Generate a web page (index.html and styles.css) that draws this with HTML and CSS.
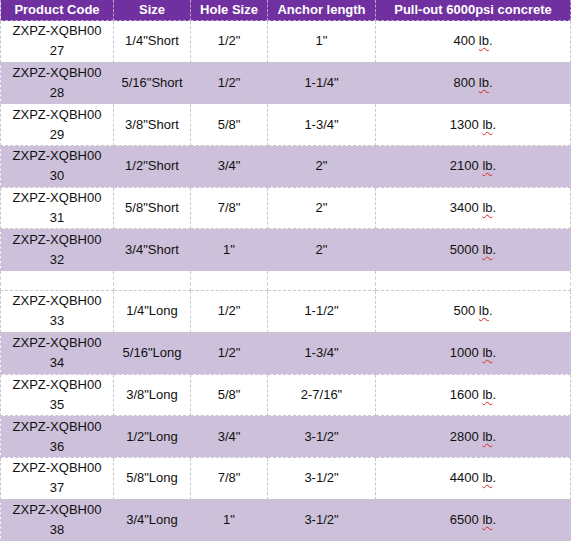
FILE: index.html
```html
<!DOCTYPE html>
<html>
<head>
<meta charset="utf-8">
<link rel="stylesheet" href="styles.css">
</head>
<body>
<table class="spec">
  <colgroup>
    <col class="c1"><col class="c2"><col class="c3"><col class="c4"><col class="c5">
  </colgroup>
  <thead>
    <tr><th>Product Code</th><th>Size</th><th>Hole Size</th><th>Anchor length</th><th>Pull-out 6000psi concrete</th></tr>
  </thead>
  <tbody>
    <tr class="w"><td>ZXPZ-XQBH00<br>27</td><td>1/4"Short</td><td>1/2"</td><td>1"</td><td>400 <span class="sp">lb</span>.</td></tr>
    <tr class="g"><td>ZXPZ-XQBH00<br>28</td><td>5/16"Short</td><td>1/2"</td><td>1-1/4"</td><td>800 <span class="sp">lb</span>.</td></tr>
    <tr class="w"><td>ZXPZ-XQBH00<br>29</td><td>3/8"Short</td><td>5/8"</td><td>1-3/4"</td><td>1300 <span class="sp">lb</span>.</td></tr>
    <tr class="g"><td>ZXPZ-XQBH00<br>30</td><td>1/2"Short</td><td>3/4"</td><td>2"</td><td>2100 <span class="sp">lb</span>.</td></tr>
    <tr class="w"><td>ZXPZ-XQBH00<br>31</td><td>5/8"Short</td><td>7/8"</td><td>2"</td><td>3400 <span class="sp">lb</span>.</td></tr>
    <tr class="g"><td>ZXPZ-XQBH00<br>32</td><td>3/4"Short</td><td>1"</td><td>2"</td><td>5000 <span class="sp">lb</span>.</td></tr>
    <tr class="w empty"><td></td><td></td><td></td><td></td><td></td></tr>
    <tr class="w"><td>ZXPZ-XQBH00<br>33</td><td>1/4"Long</td><td>1/2"</td><td>1-1/2"</td><td>500 <span class="sp">lb</span>.</td></tr>
    <tr class="g"><td>ZXPZ-XQBH00<br>34</td><td>5/16"Long</td><td>1/2"</td><td>1-3/4"</td><td>1000 <span class="sp">lb</span>.</td></tr>
    <tr class="w"><td>ZXPZ-XQBH00<br>35</td><td>3/8"Long</td><td>5/8"</td><td>2-7/16"</td><td>1600 <span class="sp">lb</span>.</td></tr>
    <tr class="g"><td>ZXPZ-XQBH00<br>36</td><td>1/2"Long</td><td>3/4"</td><td>3-1/2"</td><td>2800 <span class="sp">lb</span>.</td></tr>
    <tr class="w"><td>ZXPZ-XQBH00<br>37</td><td>5/8"Long</td><td>7/8"</td><td>3-1/2"</td><td>4400 <span class="sp">lb</span>.</td></tr>
    <tr class="g"><td>ZXPZ-XQBH00<br>38</td><td>3/4"Long</td><td>1"</td><td>3-1/2"</td><td>6500 <span class="sp">lb</span>.</td></tr>
  </tbody>
</table>
</body>
</html>
```
FILE: styles.css
```css
html, body {
  margin: 0;
  padding: 0;
  background: #ffffff;
}
.spec {
  border-collapse: collapse;
  table-layout: fixed;
  width: 570px;
  font-family: "Liberation Sans", Arial, sans-serif;
  font-size: 13px;
  color: #111111;
}
.c1 { width: 113px; }
.c2 { width: 77px; }
.c3 { width: 77px; }
.c4 { width: 108px; }
.c5 { width: 195px; }
.spec th {
  background: #7030a0;
  color: #ffffff;
  font-weight: bold;
  height: 20px;
  line-height: 20px;
  padding: 0;
  text-align: center;
  border: 1px dashed #b9a3cc;
  border-top: none;
  white-space: nowrap;
}
.spec td {
  height: 40.7px;
  line-height: 20px;
  padding: 0;
  text-align: center;
  vertical-align: middle;
  border: 1px dashed #c8c8c8;
}
.spec tr.g td {
  background: #ccc0da;
  border-color: #ccc0da;
}
.spec tr.empty td {
  height: 19px;
}
.sp {
  text-decoration: underline wavy #e0201c;
  text-decoration-thickness: 1px;
  text-underline-offset: 2px;
}
```
